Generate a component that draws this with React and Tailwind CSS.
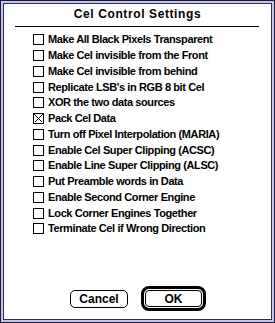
import React from "react";

const items = [
  ["Make All Black Pixels Transparent", false],
  ["Make Cel invisible from the Front", false],
  ["Make Cel invisible from behind", false],
  ["Replicate LSB's in RGB 8 bit Cel", false],
  ["XOR the two data sources", false],
  ["Pack Cel Data", true],
  ["Turn off Pixel Interpolation (MARIA)", false],
  ["Enable Cel Super Clipping (ACSC)", false],
  ["Enable Line Super Clipping (ALSC)", false],
  ["Put Preamble words in Data", false],
  ["Enable Second Corner Engine", false],
  ["Lock Corner Engines Together", false],
  ["Terminate Cel if Wrong Direction", false],
];

function Box({ checked }) {
  return (
    <div className="w-[11px] h-[11px] border border-black bg-white shrink-0 relative">
      {checked && (
        <svg width="9" height="9" viewBox="0 0 9 9" className="block" shapeRendering="crispEdges">
          <path d="M0.5 0.5 L8.5 8.5 M8.5 0.5 L0.5 8.5" stroke="black" strokeWidth="1" />
        </svg>
      )}
    </div>
  );
}

export default function App() {
  return (
    <div
      className="w-[275px] h-[323px] bg-[#1c1c38] p-px"
      style={{ fontFamily: '"Liberation Sans", Arial, sans-serif' }}
    >
      <div className="w-full h-full bg-[#c4c4f0] p-[2px]">
        <div className="w-full h-full bg-[#2e2e5c] p-px">
          <div className="w-full h-full bg-white flex flex-col text-black">
            <div className="h-[20px] flex items-center justify-center text-[12px] font-bold tracking-[0.6px]">
              Cel Control Settings
            </div>
            <div className="mt-[2px] ml-[11px] w-[244px] h-px bg-black" />
            <div className="mt-[5px] pl-[29px] flex flex-col">
              {items.map(([label, checked]) => (
                <div key={label} className="h-[15.75px] flex items-center gap-[4px]">
                  <Box checked={checked} />
                  <span className="text-[11px] font-bold leading-none tracking-[-0.4px] whitespace-nowrap">
                    {label}
                  </span>
                </div>
              ))}
            </div>
            <div className="mt-auto mb-[8px] pl-[66px] flex items-center gap-[13px]">
              <div className="w-[58px] h-[18px] border border-black rounded-[5px] flex items-center justify-center text-[12px] font-bold">
                Cancel
              </div>
              <div className="border-[3px] border-black rounded-[8px] p-px">
                <div className="w-[57px] h-[17px] border border-black rounded-[4px] flex items-center justify-center text-[12px] font-bold">
                  OK
                </div>
              </div>
            </div>
          </div>
        </div>
      </div>
    </div>
  );
}
